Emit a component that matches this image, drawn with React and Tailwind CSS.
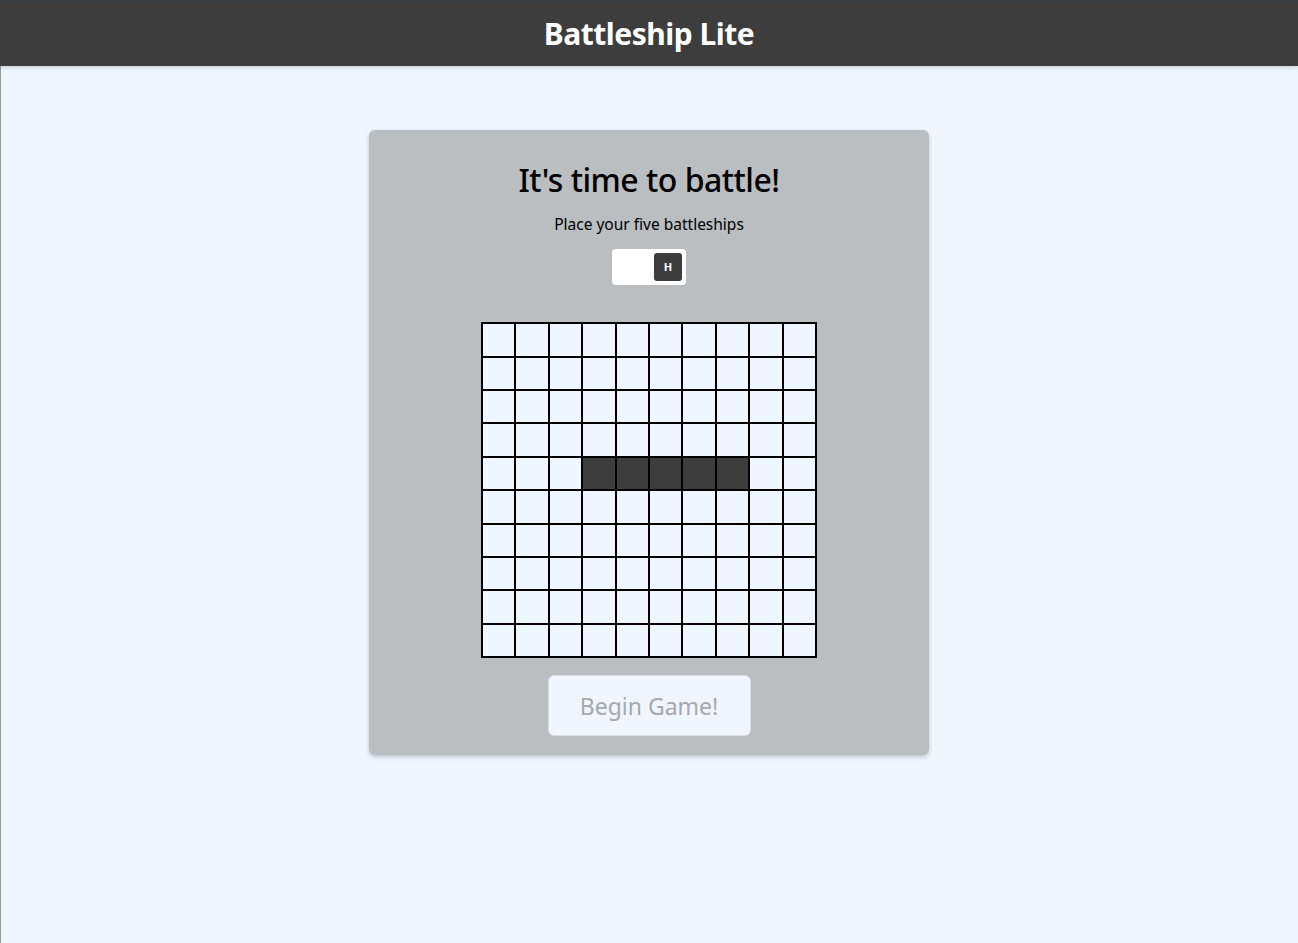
import React, { useState } from 'react';

const SIZE = 10;
const SHIP = { row: 4, start: 3, length: 5 };

const isShip = (r, c) => r === SHIP.row && c >= SHIP.start && c < SHIP.start + SHIP.length;

const App = () => {
    const [horizontal, setHorizontal] = useState(true);

    const cells = [];
    for (let r = 0; r < SIZE; r++) {
        for (let c = 0; c < SIZE; c++) {
            cells.push(
                <div
                    key={`${r}-${c}`}
                    className={`border border-black ${isShip(r, c) ? 'bg-[#3d3d3d]' : 'bg-[#eff6ff]'}`}
                />
            );
        }
    }

    return (
        <div className="min-h-[943px] bg-[#eff6fe] shadow-[inset_1px_0_0_#9a9a9a] font-['Noto_Sans',sans-serif]">
            <header className="h-[66px] bg-[#3d3d3d] border-t border-[#363b48] flex items-center justify-center shadow-[0_2px_4px_rgba(0,0,0,0.15)]">
                <h1 className="text-white text-[30px] font-bold tracking-[-0.5px]">Battleship Lite</h1>
            </header>

            <main className="flex justify-center pt-[64px]">
                <div className="w-[560px] bg-[#babec1] rounded-md shadow-[0_2px_4px_rgba(0,0,0,0.2)] flex flex-col items-center pt-[27px] pb-[19px]">
                    <h2 className="text-[32px] font-medium text-black tracking-[-0.5px] leading-[46px]">It's time to battle!</h2>
                    <p className="text-[15.5px] text-black mt-[10px]">Place your five battleships</p>

                    <button
                        onClick={() => setHorizontal(!horizontal)}
                        className={`mt-[13px] w-[74px] h-[36px] bg-white rounded flex items-center px-[4px] ${horizontal ? 'justify-end' : 'justify-start'}`}
                    >
                        <span className="w-[28px] h-[28px] rounded-[3px] bg-[#3d3d3d] text-white text-[11px] font-bold flex items-center justify-center">
                            {horizontal ? 'H' : 'V'}
                        </span>
                    </button>

                    <div className="mt-[37px] w-[336px] h-[336px] border border-black grid grid-cols-10 grid-rows-10">
                        {cells}
                    </div>

                    <button
                        disabled
                        className="mt-[17px] w-[203px] h-[61px] bg-[#eff6ff] rounded-md border border-[#d8dde2] text-[#a5a9ad] text-[23px]"
                    >
                        Begin Game!
                    </button>
                </div>
            </main>
        </div>
    );
};

export default App;
